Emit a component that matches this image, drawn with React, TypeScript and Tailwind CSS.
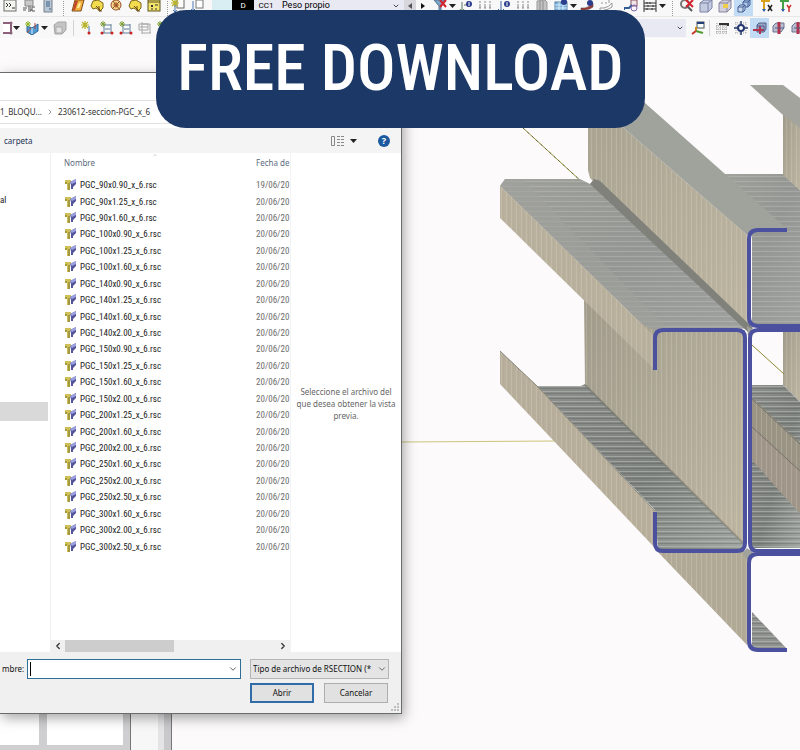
import React from 'react';
import { ChevronDown, ChevronLeft, ChevronRight, ChevronUp } from 'lucide-react';

const files = [
  ['PGC_90x0.90_x_6.rsc', '19/06/20'],
  ['PGC_90x1.25_x_6.rsc', '20/06/20'],
  ['PGC_90x1.60_x_6.rsc', '20/06/20'],
  ['PGC_100x0.90_x_6.rsc', '20/06/20'],
  ['PGC_100x1.25_x_6.rsc', '20/06/20'],
  ['PGC_100x1.60_x_6.rsc', '20/06/20'],
  ['PGC_140x0.90_x_6.rsc', '20/06/20'],
  ['PGC_140x1.25_x_6.rsc', '20/06/20'],
  ['PGC_140x1.60_x_6.rsc', '20/06/20'],
  ['PGC_140x2.00_x_6.rsc', '20/06/20'],
  ['PGC_150x0.90_x_6.rsc', '20/06/20'],
  ['PGC_150x1.25_x_6.rsc', '20/06/20'],
  ['PGC_150x1.60_x_6.rsc', '20/06/20'],
  ['PGC_150x2.00_x_6.rsc', '20/06/20'],
  ['PGC_200x1.25_x_6.rsc', '20/06/20'],
  ['PGC_200x1.60_x_6.rsc', '20/06/20'],
  ['PGC_200x2.00_x_6.rsc', '20/06/20'],
  ['PGC_250x1.60_x_6.rsc', '20/06/20'],
  ['PGC_250x2.00_x_6.rsc', '20/06/20'],
  ['PGC_250x2.50_x_6.rsc', '20/06/20'],
  ['PGC_300x1.60_x_6.rsc', '20/06/20'],
  ['PGC_300x2.00_x_6.rsc', '20/06/20'],
  ['PGC_300x2.50_x_6.rsc', '20/06/20'],
];

/* ---------- toolbar icons ---------- */

const Star = () => (
  <path d="M4 0v8M0 4h8M1 1l6 6M7 1L1 7" stroke="#b9b32a" strokeWidth="1.2" />
);

const glyphs: Record<string, React.ReactNode> = {
  terminal: (
    <>
      <rect x="1" y="1" width="12" height="11" fill="#f4f4ee" stroke="#6e6e6e" />
      <path d="M3 4l2 2-2 2M6 4l2 2-2 2M9 9h3" stroke="#333" fill="none" />
    </>
  ),
  script: (
    <>
      <path d="M3 1h8v6H3z" fill="#c9c9c9" stroke="#888" />
      <path d="M1 9h4M1 11h3M6 8h3M6 10h3v2H6M13 8h-3v4h3" stroke="#555" fill="none" />
    </>
  ),
  server: (
    <>
      <rect x="3" y="0" width="8" height="13" fill="#b8c6d6" stroke="#77818d" />
      <path d="M5 3h4M5 5h4M5 7h4M8 10h2" stroke="#3f6286" />
    </>
  ),
  plate: (
    <>
      <path d="M4 1h9l-3 11H1z" fill="#f2b23c" stroke="#7d4b1b" />
      <path d="M4 2h3L4 11H2z" fill="#c4452c" />
      <path d="M9 4l-2 5" stroke="#fff3a8" strokeWidth="2" />
    </>
  ),
  region: (
    <>
      <path d="M1 7l2-5 5-1 5 3v5l-3 3-4-3-3 1z" fill="#f3dd4f" stroke="#7c6516" />
      <path d="M6 7l5 5M9 7v5h3" stroke="#6b4a11" fill="none" />
    </>
  ),
  target: (
    <>
      <circle cx="7" cy="6" r="5" fill="#f5d78a" stroke="#9a4b2c" />
      <circle cx="7" cy="6" r="2" fill="none" stroke="#b2362a" />
      <path d="M3 10l8-8M4 2l7 9" stroke="#8a5a1e" />
    </>
  ),
  panel: (
    <>
      <rect x="1" y="1" width="12" height="11" fill="#f3e36b" stroke="#5e5420" />
      <path d="M1 3h12" stroke="#5e5420" />
      <path d="M4 6l2 2M6 6L4 8M8 6h3M4 10h2M9 9v2" stroke="#333" />
    </>
  ),
  newBox: (
    <>
      <rect x="6" y="0" width="7" height="9" fill="#fff" stroke="#666" />
      <Star />
      <path d="M4 6v7M2 11l2 2 2-2" stroke="#4a77b4" fill="none" />
    </>
  ),
  moveBox: (
    <>
      <rect x="6" y="1" width="7" height="8" fill="#fff" stroke="#777" />
      <path d="M3 2v10M1 10l2 2 2-2" stroke="#4a77b4" fill="none" />
    </>
  ),
  funnel: (
    <>
      <path d="M1 1h11L8 7v6H6V7z" fill="#79a4c8" stroke="#527792" />
      <path d="M7 1l6 7M13 1L7 8" stroke="#d3232c" strokeWidth="2" />
    </>
  ),
  dimension: (
    <>
      <path d="M3 3v10M1 10l2 3 2-3M5 6h6M9 2v6" stroke="#557c58" fill="none" />
      <circle cx="10" cy="5" r="3" fill="#2b3e8d" />
      <path d="M10 3v4" stroke="#fff" />
    </>
  ),
  supports: (
    <path d="M2 2v9M7 2v9M12 2v9M1 8h2M6 8h2M11 8h2M2 12h10" stroke="#8a8a8a" strokeDasharray="2 1" />
  ),
  load: (
    <>
      <path d="M4 2v11M1 10l3 3 3-3" stroke="#3a64a6" fill="none" />
      <circle cx="10" cy="5" r="3" fill="#2b3e8d" />
      <path d="M10 3v4" stroke="#fff" />
    </>
  ),
  tower: (
    <>
      <path d="M2 2l8-1 2 2v10H2z" fill="#c3c3c3" stroke="#999" />
      <path d="M5 2v11M8 2v11" stroke="#8d8d8d" />
    </>
  ),
  mesh: (
    <>
      <rect x="1" y="3" width="12" height="10" fill="#7db2dc" stroke="#5680a4" />
      <path d="M5 3v10M9 3v10M1 6h12M1 9h12" stroke="#d8ecf8" />
      <circle cx="10" cy="3" r="3" fill="#2b3e8d" />
    </>
  ),
  curve: (
    <>
      <path d="M1 12V9h4q5-1 8-5v4q-4 3-8 3v1z" fill="#9c3b36" stroke="#5a4a4a" strokeWidth=".6" />
      <circle cx="10" cy="4" r="3" fill="#2b3e8d" />
    </>
  ),
  curveOff: <path d="M1 12V9h4q5-1 8-5v4q-4 3-8 3v1M2 4h2M6 4h2M10 1v3" stroke="#999" fill="none" />,
  section: (
    <>
      <rect x="7" y="1" width="6" height="6" fill="#f1e5e8" stroke="#8a5661" />
      <path d="M0 11V9h5l3-3" stroke="#305c98" strokeWidth="2" fill="none" />
      <circle cx="10" cy="9" r="3" fill="none" stroke="#7b66b5" />
    </>
  ),
  abacus: (
    <path d="M1 1v12M13 1v12M1 4h12M1 7h12M1 10h12M4 3v2M7 3v2M5 6v2M10 6v2M4 9v2M9 9v2" stroke="#333" />
  ),
  searchOff: (
    <>
      <circle cx="5" cy="5" r="4" fill="none" stroke="#777" strokeWidth="2" />
      <path d="M8 8l4 4" stroke="#555" strokeWidth="2" />
      <path d="M6 1l7 7M13 1L6 8" stroke="#d3232c" strokeWidth="2" />
    </>
  ),
  cube: (
    <>
      <path d="M1 4l4-3h8v8l-4 4H1z" fill="#c5cbe0" stroke="#7a83a6" />
      <path d="M1 4h8v9M9 4l4-3" stroke="#7a83a6" fill="none" />
    </>
  ),
  cubeNote: (
    <>
      <path d="M1 4l4-3h8v8l-4 4H1z" fill="#cfd0dc" stroke="#8b83a0" />
      <path d="M1 4h8v9M9 4l4-3" stroke="#8b83a0" fill="none" />
      <path d="M5 5h5v4H5z" fill="#f0cd4b" />
    </>
  ),
  cubes: (
    <>
      <path d="M6 3l2-2h5v5l-2 2H6z" fill="#aec6ea" stroke="#425e92" />
      <path d="M1 8l2-2h5v5l-2 2H1z" fill="#cbdaf0" stroke="#425e92" />
      <path d="M1 8h5v5M6 8l2-2M6 3h5v5M11 3l2-2" stroke="#425e92" fill="none" />
    </>
  ),
  axisX: (
    <>
      <path d="M4 0v12M1 2h9" stroke="#d8a21d" strokeWidth="2" />
      <path d="M2 10l2 3 2-3z" fill="#2d5fa6" />
      <path d="M8 6l4 6M12 6l-4 6" stroke="#222" strokeWidth="1.5" />
    </>
  ),
  axisY: (
    <>
      <path d="M4 0v12M1 2h9" stroke="#46a146" strokeWidth="2" />
      <path d="M2 10l2 3 2-3z" fill="#2d5fa6" />
      <path d="M8 6l2 3 2-3M10 9v4" stroke="#c33" strokeWidth="1.5" fill="none" />
    </>
  ),
  frame: (
    <>
      <rect x="-2" y="2" width="10" height="10" fill="#fff" stroke="#8b6277" strokeWidth="2" />
      <circle cx="8" cy="2" r="1.5" fill="#8b6277" />
      <circle cx="8" cy="12" r="1.5" fill="#8b6277" />
    </>
  ),
  newCube: (
    <>
      <path d="M2 5l5 2 6-4v7l-6 4-5-3z" fill="#4f9ad2" stroke="#2a659a" />
      <path d="M7 7v6" stroke="#d5edfb" />
      <path d="M3 0v6M0 3h6M1 1l4 4M5 1L1 5" stroke="#8fb52a" />
      <path d="M2 12l4-5M10 8V2" stroke="#b43" />
    </>
  ),
  grayCube: (
    <>
      <path d="M1 4l4-3h8v8l-4 4H2z" fill="#c4c4c4" stroke="#a5a5a5" />
      <path d="M3 6h6v6H3z" fill="#e2e2e2" stroke="#aaa" />
    </>
  ),
  node: (
    <>
      <Star />
      <path d="M8 5v7" stroke="#4a77b4" />
      <circle cx="8" cy="12" r="1.5" fill="#c22" />
    </>
  ),
  member: (
    <>
      <path d="M4 3v9M11 3v9M4 4h7M1 12h12M5 8h5" stroke="#5f7d9b" fill="none" />
      <path d="M3 0v6M0 3h6M1 1l4 4M5 1L1 5" stroke="#7d9f35" />
      <circle cx="2" cy="12" r="1.5" fill="#c22" />
      <circle cx="12" cy="12" r="1.5" fill="#c22" />
    </>
  ),
  memberOff: <path d="M1 3h9v6H1zM4 1v12M12 3v9M4 3h8M4 12h9M2 6h8" stroke="#a6a6a6" fill="none" />,
  ucs: (
    <>
      <rect x="6" y="1" width="7" height="6" fill="#fff" stroke="#455" />
      <path d="M6 2h7" stroke="#24407a" strokeWidth="2" />
      <path d="M5 6v4" stroke="#d08a22" strokeWidth="2" />
      <path d="M5 10l7 2" stroke="#4f9c32" strokeWidth="2" />
      <path d="M5 10l-4 3" stroke="#c63a2a" strokeWidth="2" />
    </>
  ),
  grid: (
    <>
      <path d="M1 5h12M1 8h12M1 11h12M2 2v11M5 2v11M8 2v11M11 2v11" stroke="#9a9a9a" strokeDasharray="1 1" />
      <path d="M4 3h9v2" stroke="#333" strokeWidth="2" fill="none" />
    </>
  ),
  snap: (
    <>
      <path d="M1 2h12M1 12h12M2 1v12M12 1v12" stroke="#aaa" strokeDasharray="1 1" />
      <circle cx="7" cy="7" r="3" fill="#fff" stroke="#25396e" strokeWidth="2" />
      <path d="M7 0v4M7 10v4M0 7h4M10 7h4" stroke="#25396e" strokeWidth="1.5" />
    </>
  ),
  plane: (
    <>
      <path d="M4 4l2-2h7v6l-2 3H4z" fill="#96a4c8" stroke="#525f88" />
      <path d="M0 9h11M7 5v8" stroke="#b2334c" strokeWidth="2" />
      <path d="M4 5h7v5" stroke="#525f88" />
    </>
  ),
  planeSide: (
    <>
      <path d="M1 5l3-3h8v5l-3 4H1z" fill="#b9bfd0" stroke="#6a738f" />
      <path d="M7 1v12" stroke="#b2334c" strokeWidth="3" />
      <path d="M3 7h9" stroke="#525f88" />
    </>
  ),
};

const Icon = ({ name }: { name: string }) => (
  <svg viewBox="0 0 14 14" className="block h-3.5 w-3.5 shrink-0" aria-hidden="true" fill="none">
    {glyphs[name]}
  </svg>
);

const Tool = ({ name, active = false }: { name: string; active?: boolean }) => (
  <button
    type="button"
    title={name}
    className={`flex h-5 w-[19px] shrink-0 items-center justify-center ${active ? 'bg-[#c3dcf5]' : ''}`}
  >
    <Icon name={name} />
  </button>
);

const Caret = () => (
  <svg viewBox="0 0 7 4" className="h-1 w-[7px] shrink-0" aria-hidden="true">
    <path d="M0 0h7L3.5 4z" fill="#222" />
  </svg>
);

const Grip = () => <span className="h-5 w-px shrink-0 border-l border-dotted border-[#9a9a9a]" />;

const Toolbars = () => (
  <header className="shrink-0 overflow-hidden bg-[#f9f8f9]">
    <div className="-mt-[5px] flex h-[22px] items-center border-b border-[#e7e6e8]">
      <Tool name="terminal" />
      <Tool name="script" />
      <Tool name="server" />
      <span className="w-1.5 shrink-0" />
      <Grip />
      <span className="w-1 shrink-0" />
      {['plate', 'region', 'target', 'region', 'panel'].map((n, i) => (
        <Tool key={i} name={n} />
      ))}
      <span className="w-1 shrink-0" />
      <Grip />
      <Tool name="newBox" />
      <Tool name="moveBox" />
      <span className="ml-1.5 h-5 w-5 shrink-0 bg-[#d9eef2]" />
      <span className="flex h-5 w-[22px] shrink-0 items-center justify-center bg-black font-['Roboto'] text-[8px] text-white">D</span>
      <span className="flex h-5 w-6 shrink-0 items-center justify-center bg-[#e9e9f3] font-['Roboto'] text-[8px]">CC1</span>
      <button type="button" className="flex h-5 w-[126px] shrink-0 items-center justify-between bg-[#e9e9f3] px-1 font-['Roboto'] text-[9px]">
        Peso propio
        <ChevronDown className="h-2 w-2" />
      </button>
      <span className="flex h-5 w-3 shrink-0 items-center justify-center bg-[#d8d8dc]">
        <svg viewBox="0 0 4 6" className="h-1.5 w-1" aria-hidden="true"><path d="M4 0v6L0 3z" fill="#555" /></svg>
      </span>
      <span className="flex h-5 w-3.5 shrink-0 items-center justify-center">
        <svg viewBox="0 0 4 6" className="h-1.5 w-1" aria-hidden="true"><path d="M0 0v6l4-3z" fill="#111" /></svg>
      </span>
      <Tool name="funnel" />
      <Caret />
      {['dimension', 'supports', 'load', 'supports', 'tower', 'mesh'].map((n, i) => (
        <Tool key={i} name={n} />
      ))}
      <Caret />
      <Tool name="curve" />
      <Tool name="curveOff" />
      <span className="w-1.5 shrink-0" />
      <Tool name="section" />
      <Tool name="abacus" />
      <Caret />
      <span className="w-1.5 shrink-0" />
      <Grip />
      <span className="w-1 shrink-0" />
      <Tool name="searchOff" />
      <Tool name="cube" />
      <Tool name="cubeNote" />
      <Tool name="cubes" active />
      <span className="w-1 shrink-0" />
      <Tool name="axisX" />
      <Tool name="axisY" />
    </div>
    <div className="flex h-[21px] items-center">
      <Tool name="frame" />
      <span className="-ml-1.5 flex"><Caret /></span>
      <span className="w-0.5 shrink-0" />
      <Tool name="newCube" />
      <Caret />
      <span className="w-0.5 shrink-0" />
      <Tool name="grayCube" />
      <span className="mx-1 h-4 w-px shrink-0 bg-[#d4d4d4]" />
      {['node', 'member', 'member', 'memberOff', 'member'].map((n, i) => (
        <Tool key={i} name={n} />
      ))}
      <span className="flex-1" />
      <button type="button" title="Sistema de coordenadas" className="flex h-[18px] w-[60px] shrink-0 items-center justify-end bg-[#e9e9f3] pr-0.5">
        <ChevronDown className="h-2 w-2" />
      </button>
      <span className="w-0.5 shrink-0" />
      <Tool name="ucs" />
      <span className="mr-0.5 ml-0.5 h-4 w-px shrink-0 bg-[#d4d4d4]" />
      <Tool name="grid" />
      <Tool name="snap" />
      <Tool name="plane" active />
      <Tool name="planeSide" />
      <span className="flex w-3 shrink-0 overflow-hidden"><Tool name="planeSide" /></span>
    </div>
  </header>
);

/* ---------- 3D model of the cold formed sections ---------- */

const Model = () => (
  <svg viewBox="402 38 398 712" className="h-[712px] w-[398px] shrink-0" role="img" aria-label="Secciones PGC" fill="none">
    <defs>
      <pattern id="ribs" width="5" height="8" patternUnits="userSpaceOnUse">
        <path d="M1.5 0v8" stroke="#ddd4bf" strokeOpacity=".28" />
        <path d="M3.5 0v8" stroke="#8d8574" strokeOpacity=".08" />
      </pattern>
      <pattern id="lines" width="8" height="5" patternUnits="userSpaceOnUse">
        <path d="M0 1.5h8" stroke="#d0d0cb" strokeOpacity=".28" />
        <path d="M0 3.5h8" stroke="#4e504e" strokeOpacity=".06" />
      </pattern>
      <pattern id="linesDark" width="8" height="5" patternUnits="userSpaceOnUse">
        <path d="M0 1.5h8" stroke="#c0c3bd" strokeOpacity=".5" />
        <path d="M0 3.5h8" stroke="#444744" strokeOpacity=".25" />
      </pattern>
      <linearGradient id="web" x1="0" y1="0" x2="1" y2="1">
        <stop offset="0" stopColor="#a8a392" />
        <stop offset=".5" stopColor="#b5ae9b" />
        <stop offset="1" stopColor="#beb6a3" />
      </linearGradient>
      <linearGradient id="inner" x1="0" y1="0" x2="1" y2=".8">
        <stop offset="0" stopColor="#a09b8b" />
        <stop offset=".5" stopColor="#afa998" />
        <stop offset="1" stopColor="#bcb4a1" />
      </linearGradient>
      <linearGradient id="flange" x1="0" y1="0" x2="1" y2="1">
        <stop offset="0" stopColor="#a1a29c" />
        <stop offset=".5" stopColor="#959894" />
        <stop offset="1" stopColor="#a0a39f" />
      </linearGradient>
      <linearGradient id="floor" x1="0" y1="0" x2="1" y2="1">
        <stop offset="0" stopColor="#8b8e8b" />
        <stop offset=".55" stopColor="#7f8380" />
        <stop offset="1" stopColor="#a3a7a4" />
      </linearGradient>
    </defs>

    <path d="M523 128L582 182" stroke="#8e8a35" />
    <path d="M523 128L582 182" stroke="#3c3c22" strokeDasharray="2 4" strokeOpacity=".6" />
    <path d="M402 442L556 441" stroke="#cbc479" />

    {/* rear right member */}
    <path d="M723 174H783L800 190V325H752V232H787z" fill="url(#flange)" />
    <path d="M723 174H783L800 190V325H752V232H787z" fill="url(#lines)" />
    <path d="M783 114L800 127V190L783 175z" fill="url(#inner)" />
    <path d="M783 114L800 127V190L783 175z" fill="url(#ribs)" />
    <path d="M750 85H783L800 98V128L783 115z" fill="#a2a49d" />

    {/* right bay below */}
    <path d="M783 332H800V402L783 385z" fill="url(#inner)" />
    <path d="M783 332H800V402L783 385z" fill="url(#ribs)" />
    <path d="M752 385H783L800 402V548H752z" fill="url(#floor)" />
    <path d="M752 385H783L800 402V548H752z" fill="url(#linesDark)" />
    <path d="M752 398L800 443V470L752 426z" fill="#9a9485" />
    <path d="M752 426L800 470V514L752 460z" fill="#a0968a" />
    <path d="M752 398L800 443V514L752 460z" fill="url(#ribs)" />
    <path d="M752 399L800 444M752 427L800 471" stroke="#777266" />
    <path d="M752 345L784 374" stroke="#8e8a35" />

    {/* upper member */}
    <path d="M588 97L747 235L749 327L590 178L588 170z" fill="url(#web)" />
    <path d="M588 97L747 235L749 327L590 178L588 170z" fill="url(#ribs)" />
    <path d="M588 97L610 72L645 103L787 229H757L747 235z" fill="#a0a39c" />
    <path d="M500 186L505 179H580L590 184L598 179L750 328L654 336z" fill="url(#flange)" />
    <path d="M500 186L505 179H580L590 184L598 179L750 328L654 336z" fill="url(#lines)" />
    <path d="M500 186L505 179H522L668 329L654 336z" fill="#a0a29d" fillOpacity=".6" />
    <path d="M590 184L594 179L600 181L753 328L749 333z" fill="#7f817a" />

    {/* left C section */}
    <path d="M584 296L654 330H745V546L585 386z" fill="url(#inner)" />
    <path d="M584 296L654 330H745V546L585 386z" fill="url(#ribs)" />
    <path d="M500 186L654 336V369L500 218z" fill="#b9b19e" />
    <path d="M500 186L654 336V369L500 218z" fill="url(#ribs)" />
    <path d="M537 386H581L585 384L745 546V550H658L655 510z" fill="url(#floor)" />
    <path d="M537 386H581L585 384L745 546V550H658L655 510z" fill="url(#linesDark)" />
    <path d="M585 385L744 544" stroke="#77776d" strokeWidth="2" strokeOpacity=".6" />
    <path d="M500 351L537 386L655 511V548L500 384z" fill="#b7af9c" />
    <path d="M500 351L537 386L655 511V548L500 384z" fill="url(#ribs)" />
    <path d="M500 351L537 386L655 511" stroke="#85857a" />

    {/* lower member */}
    <path d="M657 551H747V645z" fill="#b1aa97" />
    <path d="M657 551H747V645z" fill="url(#ribs)" />
    <path d="M752 612L787 649H752z" fill="#8f928f" />
    <path d="M752 612L787 649H752z" fill="url(#linesDark)" />
    <path d="M747 548l7 5-6 9-5-9zM747 326l8 5-7 5z" fill="#a0a39c" />

    <g stroke="#4c519f" strokeWidth="4">
      <path d="M655 370V338Q655 330 663 330H737Q745 330 745 338V543Q745 551 737 551H663Q655 551 655 543V512" />
      <path d="M787 230H758Q749 230 749 239V317Q749 326 758 326H800" />
      <path d="M800 330H758Q750 330 750 338V543Q750 551 758 551H800" />
      <path d="M800 554H758Q749 554 749 563V641Q749 650 758 650H787" />
    </g>
  </svg>
);

/* ---------- open file dialog ---------- */

const FileIcon = () => (
  <svg viewBox="0 0 12 12" className="h-3 w-3 shrink-0" aria-hidden="true">
    <path d="M1 1h6v3H6v7H3V5H1z" fill="#d0c156" />
    <path d="M5 4v7M1 4h2" stroke="#77702c" />
    <path d="M6 3l6-3v5L9 8v2H7V6z" fill="#54549a" />
    <path d="M6 3l6-3v3L8 5z" fill="#9aa0e0" />
  </svg>
);

const OpenDialog = () => (
  <section
    role="dialog"
    aria-label="Abrir"
    className="absolute top-[72px] left-0 flex w-[402px] flex-col border-t border-r border-b border-[#6b6b6b] bg-white font-['Roboto_Condensed'] text-[9px] leading-3 text-[#222] shadow-[2px_4px_12px_rgba(0,0,0,0.35)]"
  >
    <div className="h-[27px]" />
    <nav className="flex h-6 items-center border-y border-[#e2e2e2] font-['Noto_Sans'] text-[8px] whitespace-nowrap text-[#333]">
      <a href="#bloque">1_BLOQU...</a>
      <ChevronRight className="mx-1 h-2 w-2 text-[#666]" />
      <a href="#seccion">230612-seccion-PGC_x_6</a>
    </nav>
    <div className="mt-1 flex h-[25px] items-center bg-[#f4f4f4] pr-[11px] font-['Noto_Sans']">
      <button type="button" className="pl-1 text-[8px] whitespace-nowrap text-[#1e3357]">carpeta</button>
      <span className="flex-1" />
      <button type="button" title="Vista" className="flex items-center gap-1.5">
        <svg viewBox="0 0 13 10" className="h-2.5 w-[13px]" aria-hidden="true" fill="none">
          <path d="M.5.5h3v9h-3zM6 .5h3M10 .5h3M6 3.5h3M10 3.5h3M6 6.5h3M10 6.5h3M6 9.5h3M10 9.5h3" stroke="#888" />
        </svg>
        <Caret />
      </button>
      <button type="button" title="Ayuda" className="ml-[21px] flex h-3 w-3 items-center justify-center rounded-full bg-[#1c5a9f] text-[9px] font-bold text-white">
        ?
      </button>
    </div>

    <div className="flex">
      <aside className="w-[51px] shrink-0 border-r border-[#f0f0f0] text-[9px]">
        <ul className="pt-10">
          <li className="h-[209px] leading-[14px]">al</li>
          <li className="mr-0.5 h-[19px] bg-[#d9d9d9]" />
        </ul>
      </aside>

      <div className="flex w-[240px] shrink-0 flex-col border-r border-[#f3f3f3]">
        <div className="flex h-[487px] flex-col pl-[13px]">
          <ChevronUp className="ml-[87px] h-1 w-2 shrink-0 text-[#555]" />
          <table className="w-[226px] table-fixed border-collapse">
            <thead>
              <tr className="h-5 font-['Noto_Sans'] text-[8px] text-[#5c6a80]">
                <th className="w-[192px] p-0 text-left align-top font-normal">Nombre</th>
                <th className="p-0 text-left align-top font-normal whitespace-nowrap">Fecha de</th>
              </tr>
            </thead>
          </table>
          <table className="h-[378px] w-[226px] table-fixed border-collapse">
            <tbody>
              {files.map(([name, date]) => (
                <tr key={name}>
                  <td className="w-[192px] p-0">
                    <span className="flex items-center gap-1 whitespace-nowrap">
                      <FileIcon />
                      {name}
                    </span>
                  </td>
                  <td className="p-0 whitespace-nowrap text-[#6d6d6d]">{date}</td>
                </tr>
              ))}
            </tbody>
          </table>
        </div>
        <div className="flex h-3 items-center bg-[#f0f0f0] pr-0.5">
          <ChevronLeft className="mx-0.5 h-2.5 w-2.5 text-[#333]" strokeWidth={3} />
          <span className="h-3 w-[109px] bg-[#cdcdcd]" />
          <span className="flex-1" />
          <ChevronRight className="h-2.5 w-2.5 text-[#333]" strokeWidth={3} />
        </div>
      </div>

      <p className="flex-1 pt-[233px] text-center font-['Noto_Sans'] text-[8px] leading-3 text-[#666]">
        Seleccione el archivo del
        <br />
        que desea obtener la vista
        <br />
        previa.
      </p>
    </div>

    <form className="bg-[#f0f0f0] pt-[7px] pb-[10px]" onSubmit={(e) => e.preventDefault()}>
      <div className="flex items-center pr-3 font-['Noto_Sans'] text-[8px]">
        <label htmlFor="file-name" className="flex w-[27px] pl-0.5 text-[#111]">mbre:</label>
        <div className="flex h-5 w-[214px] items-center border border-[#2f6f97] bg-white pr-0.5 pl-0.5">
          <span className="h-3.5 w-px bg-black" />
          <input id="file-name" type="text" className="min-w-0 flex-1 bg-transparent outline-none" />
          <ChevronDown className="h-2.5 w-2.5 text-[#444]" />
        </div>
        <div className="relative ml-[9px] flex-1">
          <select aria-label="Tipo de archivo" className="h-5 w-full appearance-none border border-[#b5b5b5] bg-[#e4e4e4] pl-0.5 text-[#111]">
            <option>Tipo de archivo de RSECTION (*</option>
          </select>
          <ChevronDown className="pointer-events-none absolute top-[5px] right-0.5 h-2.5 w-2.5 text-[#555]" />
        </div>
      </div>
      <div className="mt-1 flex justify-end gap-[10px] pr-[13px] font-['Noto_Sans'] text-[8px] text-[#111]">
        <button type="submit" className="h-5 w-16 border-2 border-[#2f6ca8] bg-[#e1e1e1]">Abrir</button>
        <button type="button" className="h-5 w-16 border border-[#adadad] bg-[#e1e1e1]">Cancelar</button>
      </div>
    </form>
    <svg viewBox="0 0 8 8" className="absolute right-0.5 bottom-0.5 h-2 w-2" aria-hidden="true">
      <path d="M6 0h2v2H6zM6 3h2v2H6zM3 3h2v2H3zM6 6h2v2H6zM3 6h2v2H3zM0 6h2v2H0z" fill="#bdbdbd" />
    </svg>
  </section>
);

export default function App() {
  return (
    <div className="relative flex min-h-screen flex-col overflow-hidden bg-[#fcfafb]">
      <Toolbars />

      <main className="flex flex-1 justify-between">
        <div className="flex shrink-0 flex-col justify-end">
          <div className="flex h-10 items-stretch">
            <div className="grid w-[131px] grid-cols-[39px_76px] gap-x-2 border-r border-[#777] bg-[#cfcfd1] pb-[5px]">
              <span className="bg-white" />
              <span className="bg-white" />
            </div>
            <div className="w-[27px] bg-[#f7f7f8]" />
            <div className="w-1.5 bg-[#e4e4e6]" />
            <div className="w-2 border-r border-[#777] bg-[#c9c9cb]" />
          </div>
        </div>
        <Model />
      </main>

      <OpenDialog />

      <h1 className="absolute top-[10px] left-[156px] flex h-[118px] w-[489px] items-center justify-center rounded-[30px] bg-[#1c3866] font-['Roboto_Condensed'] text-[64px] leading-none font-medium whitespace-nowrap text-white">
        FREE DOWNLOAD
      </h1>
    </div>
  );
}
